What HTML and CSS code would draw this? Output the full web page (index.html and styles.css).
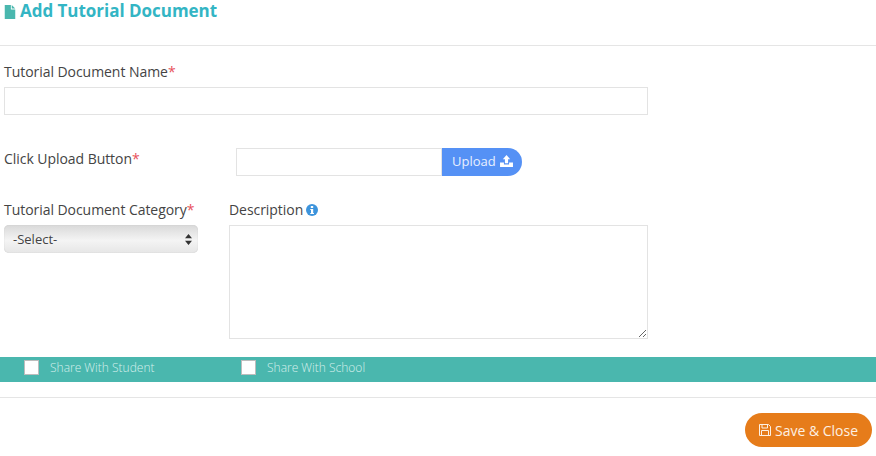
FILE: index.html
```html
<!DOCTYPE html>
<html lang="en">
<head>
  <meta charset="UTF-8" />
  <title>Add Tutorial Document</title>
  <link rel="stylesheet" href="styles.css">
</head>
<body>

  <div class="modal-header">
    <h4 class="modal-title">
      <svg class="title-icon" viewBox="0 0 12 16" width="12" height="14"><path d="M0 0h7v5h5v11H0z"/><path d="M8 0l4 4H8z"/></svg>
      Add Tutorial Document
    </h4>
    <svg class="close-mark" viewBox="0 0 12 12" width="12" height="12"><path d="M1 1l10 10M11 1L1 11"/></svg>
  </div>

  <div class="form-body">
    <label class="field-label" for="docName">Tutorial Document Name<span class="req">*</span></label>
    <input class="text-input name-input" type="text" id="docName" />

    <div class="upload-row">
      <label class="field-label upload-label" for="docFile">Click Upload Button<span class="req">*</span></label>
      <input class="text-input file-input" type="text" id="docFile" />
      <button class="upload-btn"><span class="upload-text">Upload</span>
        <svg viewBox="0 0 14 13" width="13" height="12"><path d="M7 0l4 4.600H8.700V9H5.300V4.600H3z"/><path d="M0 8h4.200v2.200h5.600V8H14v5H0z"/></svg>
      </button>
    </div>

    <div class="details-row">
      <div class="category-col">
        <label class="field-label" for="docCategory">Tutorial Document Category<span class="req">*</span></label>
        <div class="select-wrap">
          <select class="select-input" id="docCategory">
            <option>-Select-</option>
          </select>
          <svg class="select-arrows" viewBox="0 0 7 11" width="7" height="11"><path d="M3.500 0L7 4.300H0zM0 6.700h7L3.500 11z"/></svg>
        </div>
      </div>
      <div class="description-col">
        <label class="field-label description-label" for="docDescription">Description
          <svg class="info-icon" viewBox="0 0 12 12" width="12" height="12"><circle cx="6" cy="6" r="6"/><rect class="info-mark" x="4.800" y="2" width="2.400" height="2"/><path class="info-mark" d="M4.300 5h2.900v4h.8v1H4.300V9h.7V6h-.7z"/></svg>
        </label>
        <textarea class="text-input description-input" id="docDescription"></textarea>
      </div>
    </div>
  </div>

  <div class="share-bar">
    <label class="share-option"><input type="checkbox" />Share With Student</label>
    <label class="share-option"><input type="checkbox" />Share With School</label>
  </div>

  <div class="modal-footer">
    <button class="save-btn">
      <svg viewBox="0 0 12 12" width="12" height="12"><path d="M.5.500h9l2 2v9H.500z M3 .500v3.500h5.500V.500 M2.500 11.500V6.500h7v5"/></svg>
      Save &amp; Close
    </button>
  </div>

</body>
</html>
```

FILE: styles.css
```css
body {
  margin: 0;
  padding: 0;
  background-color: #ffffff;
  color: #444;
  font-family: "Open Sans", sans-serif;
  font-size: 14px;
  letter-spacing: -0.05px;
  overflow: hidden;
}
.modal-header {
  position: relative;
  height: 45px;
  box-sizing: content-box;
  border-bottom: 1px solid #e5e5e5;
}
.modal-title {
  display: flex;
  align-items: center;
  gap: 4px;
  margin: 0;
  padding: 0 0 0 4px;
  height: 22px;
  color: #33b5c4;
  font-size: 17px;
  font-weight: 700;
  line-height: 22px;
  letter-spacing: -0.03px;
}
.title-icon {
  fill: #4ab7ae;
  margin-top: 2px;
}
.close-mark {
  position: absolute;
  top: -11px;
  right: 4px;
  fill: none;
  stroke: #b5b5b5;
  stroke-width: 1;
}
.form-body {
  padding: 16px 0 0 4px;
  width: 644px;
}
.field-label {
  display: block;
  height: 20px;
  line-height: 20px;
}
.req {
  color: #e8505b;
}
.text-input {
  display: block;
  box-sizing: border-box;
  border: 1px solid #e3e3e3;
  background-color: #fff;
  margin: 0;
  padding: 4px 8px;
  font-family: inherit;
}
.name-input {
  width: 644px;
  height: 28px;
  margin-top: 5px;
}
.upload-row {
  display: flex;
  align-items: flex-start;
  margin-top: 33px;
}
.upload-label {
  width: 232px;
  margin-top: 1px;
}
.file-input {
  width: 206px;
  height: 28px;
}
.upload-btn {
  display: flex;
  align-items: center;
  gap: 4px;
  width: 80px;
  height: 28px;
  padding: 0 0 0 10px;
  border: none;
  border-radius: 0 14px 14px 0;
  background-color: #5591f5;
  color: #e8f0fe;
  font-family: inherit;
  font-size: 13px;
}
.upload-text {
  margin-top: -2px;
}
.upload-btn svg {
  fill: #fff;
  margin-top: -2px;
}
.details-row {
  display: flex;
  margin-top: 24px;
}
.category-col {
  width: 224px;
}
.description-col {
  width: 420px;
}
.description-label {
  padding-left: 1px;
}
.select-wrap {
  position: relative;
  width: 194px;
  margin-top: 5px;
}
.select-input {
  display: block;
  appearance: none;
  box-sizing: border-box;
  width: 194px;
  height: 28px;
  padding: 0 9px;
  border: none;
  border-radius: 5px;
  background: linear-gradient(#d9d9d9, #f4f4f4 55%, #e6e6e6);
  box-shadow: inset 0 0 1px #bbb;
  color: #444;
  font-family: inherit;
  font-size: 13px;
}
.select-arrows {
  position: absolute;
  top: 9px;
  right: 6px;
  fill: #333;
}
.info-icon {
  margin-left: -1px;
  vertical-align: -1px;
  fill: #3d94dc;
}
.info-mark {
  fill: #fff;
}
.description-input {
  width: 419px;
  height: 114px;
  margin: 5px 0 0 1px;
}
.share-bar {
  display: flex;
  height: 25px;
  margin-top: 18px;
  padding-left: 24px;
  background-color: #4ab7ae;
}
.share-option {
  display: flex;
  align-items: flex-start;
  width: 217px;
  color: #d5efec;
  font-size: 12px;
  font-weight: 300;
  letter-spacing: 0;
  line-height: 22px;
}
.share-option input {
  appearance: none;
  box-sizing: border-box;
  width: 15px;
  height: 15px;
  margin: 3px 11px 0 0;
  border: 1px solid #bdbdbd;
  background-color: #fff;
}
.modal-footer {
  display: flex;
  justify-content: flex-end;
  margin-top: 15px;
  padding: 15px 4px 0 0;
  border-top: 1px solid #e5e5e5;
}
.save-btn {
  display: flex;
  align-items: center;
  justify-content: center;
  gap: 4px;
  width: 127px;
  height: 34px;
  padding: 0;
  border: none;
  border-radius: 17px;
  background-color: #e67c1a;
  color: #fdf0e2;
  font-family: inherit;
  font-size: 14px;
}
.save-btn svg {
  fill: none;
  stroke: #fdf0e2;
  stroke-width: 1;
}
```
